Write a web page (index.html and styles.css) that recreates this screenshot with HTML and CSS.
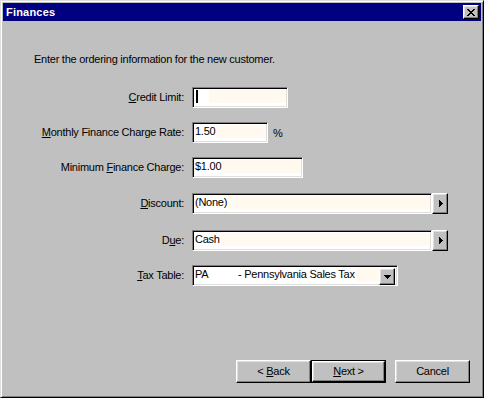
FILE: index.html
```html
<!DOCTYPE html>
<html>
<head>
<meta charset="utf-8">
<link rel="stylesheet" href="styles.css">
</head>
<body>
<div class="window">
  <div class="titlebar">
    <span class="title">Finances</span>
    <div class="close bevel">
      <svg width="8" height="7" viewBox="0 0 8 7" shape-rendering="crispEdges"><path fill="#000" d="M0 0h2v1H0zM6 0h2v1H6zM1 1h2v1H1zM5 1h2v1H5zM2 2h4v1H2zM3 3h2v1H3zM2 4h4v1H2zM1 5h2v1H1zM5 5h2v1H5zM0 6h2v1H0zM6 6h2v1H6z"/></svg>
    </div>
  </div>
  <div class="content">
    <p class="intro">Enter the ordering information for the new customer.</p>
    <div class="form">
      <div class="row">
        <span class="lbl"><u>C</u>redit Limit:</span>
        <div class="fieldwrap"><div class="field w-credit"><span class="caret"></span></div></div>
      </div>
      <div class="row">
        <span class="lbl"><u>M</u>onthly Finance Charge Rate:</span>
        <div class="fieldwrap"><div class="field w-rate"><span class="val">1.50</span></div><span class="unit">%</span></div>
      </div>
      <div class="row">
        <span class="lbl">Minimum <u>F</u>inance Charge:</span>
        <div class="fieldwrap"><div class="field w-min"><span class="val">$1.00</span></div></div>
      </div>
      <div class="row row-d1">
        <span class="lbl"><u>D</u>iscount:</span>
        <div class="fieldwrap"><div class="field w-wide"><span class="val">(None)</span></div>
          <div class="arrowbtn bevel"><svg width="4" height="7" viewBox="0 0 4 7" shape-rendering="crispEdges"><path fill="#000" d="M0 0h1v7H0zM1 1h1v5H1zM2 2h1v3H2zM3 3h1v1H3z"/></svg></div>
        </div>
      </div>
      <div class="row row-d2">
        <span class="lbl">D<u>u</u>e:</span>
        <div class="fieldwrap"><div class="field w-wide"><span class="val">Cash</span></div>
          <div class="arrowbtn bevel"><svg width="4" height="7" viewBox="0 0 4 7" shape-rendering="crispEdges"><path fill="#000" d="M0 0h1v7H0zM1 1h1v5H1zM2 2h1v3H2zM3 3h1v1H3z"/></svg></div>
        </div>
      </div>
      <div class="row">
        <span class="lbl"><u>T</u>ax Table:</span>
        <div class="fieldwrap"><div class="field combo"><span class="val code">PA</span><span class="val">- Pennsylvania Sales Tax</span>
          <div class="dropbtn bevel"><svg width="7" height="4" viewBox="0 0 7 4" shape-rendering="crispEdges"><path fill="#000" d="M0 0h7v1H0zM1 1h5v1H1zM2 2h3v1H2zM3 3h1v1H3z"/></svg></div>
        </div></div>
      </div>
    </div>
    <div class="buttons">
      <div class="btn bevel">&lt;&nbsp;<u>B</u>ack</div>
      <div class="btn default"><div class="bevel inner"><u>N</u>ext&nbsp;&gt;</div></div>
      <div class="btn bevel cancel">Cancel</div>
    </div>
  </div>
</div>
</body>
</html>
```
FILE: styles.css
```css
html, body {
  margin: 0;
  padding: 0;
  background: #c0c0c0;
}
body {
  font-family: "Liberation Sans", Arial, sans-serif;
  font-size: 11px;
  letter-spacing: -0.25px;
  color: #000;
}
.window {
  width: 484px;
  height: 398px;
  box-sizing: border-box;
  border: 1px solid;
  border-color: #dfdfdf #000 #000 #dfdfdf;
  box-shadow: inset 1px 1px #fff, inset -1px -1px #808080;
  padding: 2px;
  background: #c0c0c0;
  display: flex;
  flex-direction: column;
}
.titlebar {
  height: 18px;
  background: #000080;
  display: flex;
  align-items: center;
  justify-content: space-between;
  padding: 0 2px 0 3px;
  flex: none;
}
.title {
  color: #fff;
  font-weight: bold;
  font-size: 11px;
  letter-spacing: 0.2px;
}
.bevel {
  box-sizing: border-box;
  background: #c0c0c0;
  border: 1px solid;
  border-color: #fff #000 #000 #fff;
  box-shadow: inset -1px -1px #808080, inset 1px 1px #dfdfdf;
}
.close {
  width: 16px;
  height: 14px;
  display: flex;
  align-items: center;
  justify-content: center;
}
.close svg { display: block; margin-left: -1px; }
.content {
  flex: 1;
  display: flex;
  flex-direction: column;
}
.intro {
  margin: 32px 0 0 31px;
  line-height: 13px;
}
.form {
  margin-top: 21px;
  display: flex;
  flex-direction: column;
  gap: 14px;
}
.row {
  display: grid;
  grid-template-columns: 181px auto;
  column-gap: 8px;
  height: 21px;
  align-items: center;
}
.row-d1 { margin-top: 1px; }
.row-d2 { margin-top: 2px; }
.lbl {
  text-align: right;
  line-height: 21px;
  white-space: nowrap;
}
.fieldwrap {
  display: flex;
  align-items: center;
  height: 21px;
}
.field {
  height: 21px;
  box-sizing: border-box;
  border: 1px solid;
  border-color: #808080 #fff #fff #808080;
  box-shadow: inset 1px 1px #000, inset -1px -1px #dfdfdf;
  background: linear-gradient(to bottom, #fff 0 2px, #fff9ef 2px 15px, #fff 15px);
  display: flex;
  align-items: flex-start;
  padding: 2px 0 0 2px;
  position: relative;
}
.val {
  background: #fff;
  line-height: 13px;
  padding-right: 1px;
  white-space: nowrap;
}
.w-credit { width: 96px; background: linear-gradient(to bottom, #fff 0 2px, transparent 2px 15px, #fff 15px), linear-gradient(to right, #fff 0 16px, #fff9ef 16px); }
.w-rate { width: 76px; }
.w-min { width: 111px; }
.w-wide { width: 240px; }
.caret {
  width: 2px;
  height: 13px;
  background: #000;
  margin-left: 1px;
}
.unit {
  margin-left: 5px;
}
.arrowbtn {
  width: 16px;
  height: 21px;
  display: flex;
  align-items: center;
  justify-content: center;
}
.arrowbtn svg { display: block; margin-left: 1px; }
.combo {
  width: 206px;
}
.code {
  width: 43px;
  padding-right: 0;
}
.dropbtn {
  position: absolute;
  right: 2px;
  top: 2px;
  width: 16px;
  height: 17px;
  display: flex;
  align-items: center;
  justify-content: center;
}
.dropbtn svg { display: block; }
.buttons {
  margin-top: auto;
  display: flex;
  justify-content: flex-end;
  padding: 0 11px 12px 0;
}
.btn {
  width: 75px;
  height: 23px;
  box-sizing: border-box;
  display: flex;
  align-items: center;
  justify-content: center;
  line-height: 13px;
}
.btn.default {
  border: 1px solid #000;
}
.btn.default .inner {
  width: 100%;
  height: 100%;
  display: flex;
  align-items: center;
  justify-content: center;
}
.cancel {
  margin-left: 9px;
}
```
